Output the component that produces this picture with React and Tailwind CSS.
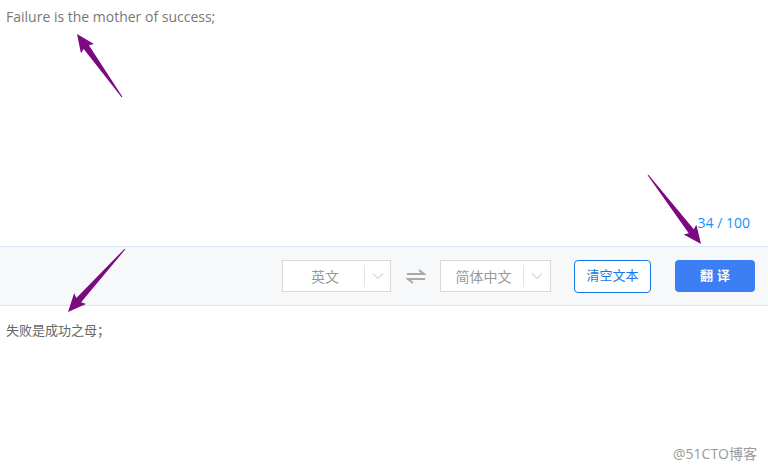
import React from "react";

const font = { fontFamily: '"Open Sans", "Noto Sans CJK SC", sans-serif' };

// builds a tapered arrow polygon from tail to tip
const arrowPoints = (tx, ty, hx, hy) => {
  const dx = hx - tx;
  const dy = hy - ty;
  const len = Math.sqrt(dx * dx + dy * dy);
  const ux = dx / len;
  const uy = dy / len;
  const nx = -uy;
  const ny = ux;
  const headLen = 18;
  const bx = hx - ux * headLen;
  const by = hy - uy * headLen;
  const shaft = 3.2;
  const wing = 8;
  const pts = [
    [tx + nx * 0.5, ty + ny * 0.5],
    [bx + nx * shaft + ux * 2, by + ny * shaft + uy * 2],
    [bx + nx * wing, by + ny * wing],
    [hx, hy],
    [bx - nx * wing, by - ny * wing],
    [bx - nx * shaft + ux * 2, by - ny * shaft + uy * 2],
    [tx - nx * 0.5, ty - ny * 0.5],
  ];
  return pts.map((p) => p.join(",")).join(" ");
};

const Chevron = () => (
  <svg width="12" height="8" viewBox="0 0 12 8" className="text-[#bbb]">
    <path d="M1 1.5 L6 6.5 L11 1.5" fill="none" stroke="currentColor" strokeWidth="1" />
  </svg>
);

const Select = ({ label, width, leftWidth }) => (
  <div
    className="flex items-center h-[32px] border border-[#d9d9d9] bg-white"
    style={{ width }}
  >
    <div className="flex justify-center pl-[3px] text-[14px] text-[#9a9a9a]" style={{ width: leftWidth }}>
      {label}
    </div>
    <div className="w-px h-[22px] bg-[#e4e4e4]" />
    <div className="flex-1 flex justify-center">
      <Chevron />
    </div>
  </div>
);

export default function App() {
  return (
    <div className="relative w-[768px] h-[473px] bg-white overflow-hidden" style={font}>
      <div className="h-[246px] flex flex-col justify-between px-[6px] pt-[6px] pb-[13px]">
        <div className="text-[14px] text-[#777]">Failure is the mother of success;</div>
        <div className="self-end pr-[12px] text-[14px] text-[#1890ff]">34 / 100</div>
      </div>

      <div className="h-[60px] bg-[#f7f8fa] border-y border-[#dce8f5] flex items-center justify-end pr-[13px]">
        <Select label="英文" width={109} leftWidth={81} />
        <div className="w-[49px] flex justify-center">
          <svg width="20" height="15" viewBox="0 0 20 15" className="text-[#a8a8a8]">
            <path d="M1 5 H18 L13 1" fill="none" stroke="currentColor" strokeWidth="2" />
            <path d="M19 10 H2 L7 14" fill="none" stroke="currentColor" strokeWidth="2" />
          </svg>
        </div>
        <Select label="简体中文" width={111} leftWidth={82} />
        <button className="ml-[23px] w-[77px] h-[33px] rounded-[4px] border border-[#1677e8] bg-white text-[13px] text-[#1677e8]">
          清空文本
        </button>
        <button className="ml-[24px] w-[80px] h-[32px] rounded-[4px] bg-[#3c7ff4] text-[13px] text-white font-bold tracking-[4px] pl-[4px]">
          翻译
        </button>
      </div>

      <div className="px-[6px] pt-[15px] text-[13px] text-[#666]">失败是成功之母；</div>

      <div className="absolute right-[11px] bottom-[9px] text-[14px] text-[#999]">@51CTO博客</div>

      <svg className="absolute inset-0 pointer-events-none" width="768" height="473">
        <polygon points={arrowPoints(122, 97, 77, 34)} fill="#7b0a82" />
        <polygon points={arrowPoints(648, 175, 701, 244)} fill="#7b0a82" />
        <polygon points={arrowPoints(125, 249, 68, 312)} fill="#7b0a82" />
      </svg>
    </div>
  );
}
